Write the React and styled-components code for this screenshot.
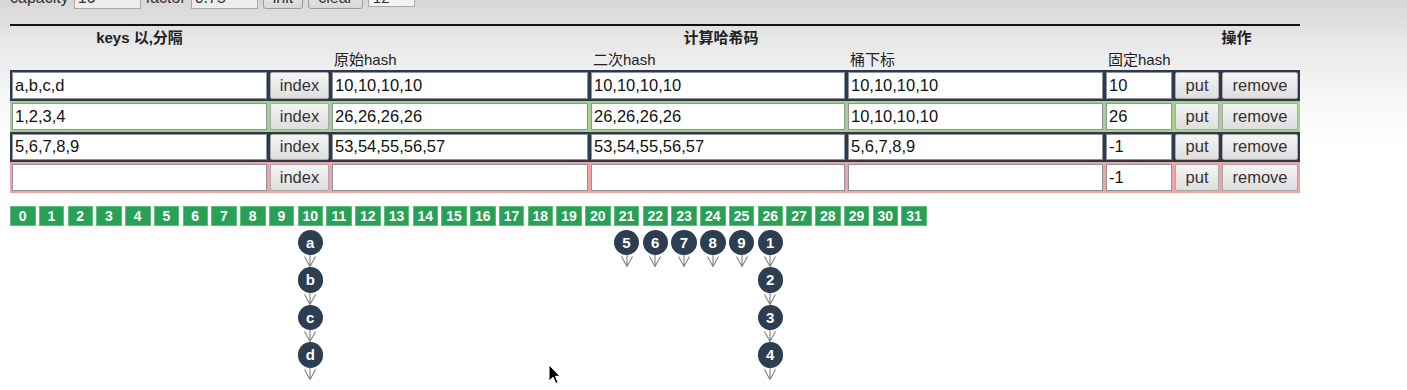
import { createGlobalStyle, styled } from "styled-components";

const GlobalStyle = createGlobalStyle`
  html, body {
    margin: 0;
    padding: 0;
  }
  body {
    font-family: "Liberation Sans", "Noto Sans CJK SC", sans-serif;
    color: #222;
    background: #fff;
  }
`;

const COLS = "255px 59px 256px 254px 255px 66px 44px 76px";

const tones = {
  dark: "#2d3a4c",
  green: "#a8cf8f",
  pink: "#f0a3a3",
};

const Page = styled.div`
  position: relative;
  height: 390px;
  overflow: hidden;
  padding: 0 10px;
  background: linear-gradient(#d7d7d7 0px, #e9e9e9 45px, #f7f7f7 100px, #fff 150px);
`;

const Toolbar = styled.div`
  display: flex;
  align-items: center;
  gap: 5px;
  height: 24px;
  margin-top: -14px;
  font-size: 16px;
  color: #333;
`;

const SmallInput = styled.input`
  box-sizing: border-box;
  width: 67px;
  height: 22px;
  border: 1px solid #a9a9a9;
  background: #eeeeee;
  font: 16px "Liberation Sans", sans-serif;
  padding: 0 3px;
  color: #333;
`;

const ToolButton = styled.button`
  box-sizing: border-box;
  height: 22px;
  padding: 0 9px;
  border: 1px solid #9c9c9c;
  border-radius: 3px;
  background: linear-gradient(#eeeeee, #d8d8d8);
  font: 16px "Liberation Sans", sans-serif;
  color: #333;
`;

const Picker = styled.select`
  box-sizing: border-box;
  width: 47px;
  height: 20px;
  margin-top: -3px;
  border: 1px solid #a9a9a9;
  background: #f3f3f3;
  font: 15px "Liberation Sans", sans-serif;
  color: #333;
`;

const Table = styled.div`
  width: 1290px;
  margin-top: 14px;
  border-top: 2px solid #111;
`;

const HeadTop = styled.div`
  display: grid;
  grid-template-columns: ${COLS};
  column-gap: 3px;
  padding: 0 2px;
  height: 24px;
  align-items: center;
  font-size: 15px;
  font-weight: bold;
  line-height: 20px;
  color: #222;
`;

const HeadCell = styled.div`
  grid-column: ${(p) => p.$col};
  text-align: center;
`;

const HeadSub = styled.div`
  display: grid;
  grid-template-columns: ${COLS};
  column-gap: 3px;
  padding: 0 2px;
  height: 20px;
  align-items: center;
  font-size: 15px;
  line-height: 20px;
  color: #222;
`;

const SubCell = styled.div`
  grid-column: ${(p) => p.$col};
  padding-left: 2px;
`;

const DataRow = styled.div`
  display: grid;
  grid-template-columns: ${COLS};
  column-gap: 3px;
  padding: 2px;
  background: ${(p) => tones[p.$tone]};
`;

const Field = styled.input`
  box-sizing: border-box;
  width: 100%;
  height: 26.8px;
  border: 1px solid #8d929b;
  background: #fff;
  padding: 0 2px;
  font: 16.5px "Liberation Sans", sans-serif;
  color: #111;
  outline: none;
`;

const ActButton = styled.button`
  box-sizing: border-box;
  width: 100%;
  height: 26.8px;
  padding: 0;
  border: 1px solid #a9a9a9;
  border-radius: 2px;
  background: linear-gradient(#f5f5f5, #dedede);
  font: 16.5px "Liberation Sans", sans-serif;
  color: #333;
`;

const BucketRow = styled.div`
  display: flex;
  align-items: flex-start;
  gap: 3.25px;
  margin-top: 13px;
`;

const BucketCol = styled.div`
  width: 25.5px;
  display: flex;
  flex-direction: column;
  align-items: center;
`;

const BucketBox = styled.div`
  box-sizing: border-box;
  width: 100%;
  height: 19.5px;
  display: flex;
  align-items: center;
  justify-content: center;
  background: #28a055;
  border: 1px solid #62bb80;
  color: #fff;
  font-size: 14px;
  font-weight: bold;
`;

const Chain = styled.div`
  margin-top: 4px;
  display: flex;
  flex-direction: column;
  align-items: center;
`;

const NodeItem = styled.div`
  display: flex;
  flex-direction: column;
  align-items: center;
`;

const Circle = styled.div`
  flex: none;
  width: 25.5px;
  height: 25.5px;
  border-radius: 50%;
  background: #2c3e50;
  color: #fff;
  font-size: 15px;
  font-weight: bold;
  display: flex;
  align-items: center;
  justify-content: center;
`;

const Cursor = styled.svg`
  position: absolute;
  left: 548px;
  top: 364px;
`;

const rows = [
  { tone: "dark", keys: "a,b,c,d", raw: "10,10,10,10", second: "10,10,10,10", idx: "10,10,10,10", fixed: "10" },
  { tone: "green", keys: "1,2,3,4", raw: "26,26,26,26", second: "26,26,26,26", idx: "10,10,10,10", fixed: "26" },
  { tone: "dark", keys: "5,6,7,8,9", raw: "53,54,55,56,57", second: "53,54,55,56,57", idx: "5,6,7,8,9", fixed: "-1" },
  { tone: "pink", keys: "", raw: "", second: "", idx: "", fixed: "-1" },
];

const chains = {
  10: ["a", "b", "c", "d"],
  21: ["5"],
  22: ["6"],
  23: ["7"],
  24: ["8"],
  25: ["9"],
  26: ["1", "2", "3", "4"],
};

const Arrow = () => (
  <svg width="14" height="12" viewBox="0 0 14 12">
    <path d="M7 0V11.5M1.5 1.5L7 11.5L12.5 1.5" fill="none" stroke="#8a8a8a" strokeWidth="1.2" />
  </svg>
);

const App = () => {
  return (
    <Page>
      <GlobalStyle />
      <Toolbar>
        <span>capacity</span>
        <SmallInput defaultValue="16" />
        <span>factor</span>
        <SmallInput defaultValue="0.75" />
        <ToolButton>init</ToolButton>
        <ToolButton>clear</ToolButton>
        <Picker defaultValue="12">
          <option value="12">12</option>
        </Picker>
      </Toolbar>

      <Table>
        <HeadTop>
          <HeadCell $col="1">keys 以,分隔</HeadCell>
          <HeadCell $col="2 / span 5">计算哈希码</HeadCell>
          <HeadCell $col="7 / span 2">操作</HeadCell>
        </HeadTop>
        <HeadSub>
          <SubCell $col="3">原始hash</SubCell>
          <SubCell $col="4">二次hash</SubCell>
          <SubCell $col="5">桶下标</SubCell>
          <SubCell $col="6">固定hash</SubCell>
        </HeadSub>
        {rows.map((r, i) => (
          <DataRow key={i} $tone={r.tone}>
            <Field defaultValue={r.keys} />
            <ActButton>index</ActButton>
            <Field defaultValue={r.raw} />
            <Field defaultValue={r.second} />
            <Field defaultValue={r.idx} />
            <Field defaultValue={r.fixed} />
            <ActButton>put</ActButton>
            <ActButton>remove</ActButton>
          </DataRow>
        ))}
      </Table>

      <BucketRow>
        {Array.from({ length: 32 }, (_, i) => (
          <BucketCol key={i}>
            <BucketBox>{i}</BucketBox>
            {chains[i] && (
              <Chain>
                {chains[i].map((k) => (
                  <NodeItem key={k}>
                    <Circle>{k}</Circle>
                    <Arrow />
                  </NodeItem>
                ))}
              </Chain>
            )}
          </BucketCol>
        ))}
      </BucketRow>

      <Cursor width="13" height="21" viewBox="0 0 13 21">
        <path d="M1 1L1 17L5 13.2L7.8 19.5L10.2 18.5L7.4 12.3L12 12.3Z" fill="#000" stroke="#fff" strokeWidth="1" />
      </Cursor>
    </Page>
  );
};

export default App;
